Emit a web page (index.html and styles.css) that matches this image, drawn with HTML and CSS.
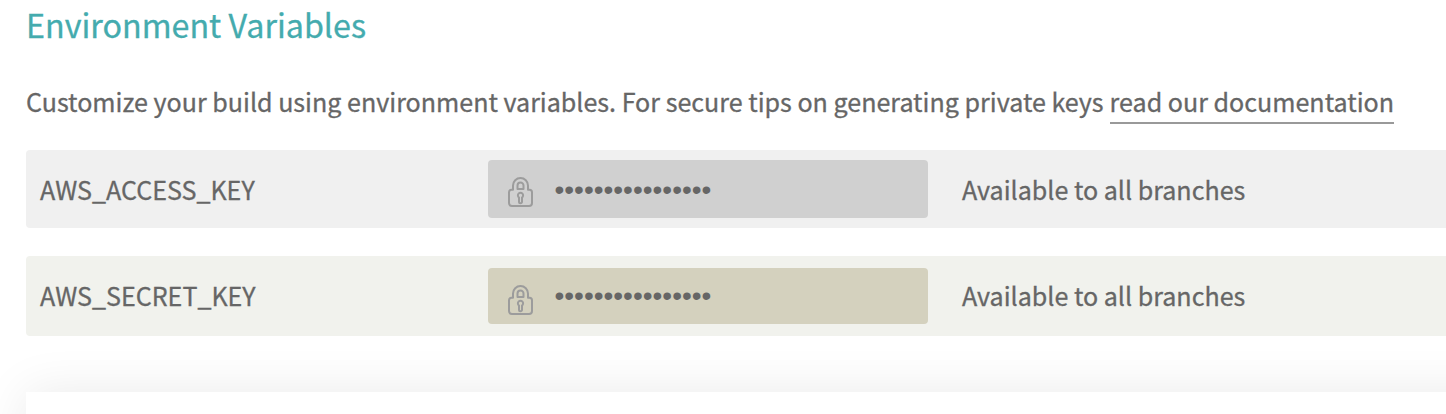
FILE: index.html
```html
<!DOCTYPE html>
<html lang="en">
<head><meta charset="utf-8"><title>Environment Variables</title><link rel="stylesheet" href="styles.css"></head>
<body>
<main class="settings">
<h1 class="title">Environment Variables</h1>
<p class="intro"><span>Customize your build using environment variables. For secure tips on generating private keys</span><a class="link" href="#">read our documentation</a></p>
<section class="vars">
<div class="row"><span class="name">AWS_ACCESS_KEY</span><div class="value"><svg class="lock" viewBox="0 0 25 30" width="25" height="30"><path d="M5 12.8V8.5a7.5 7.5 0 0 1 15 0V12.8H21.500a2.500 2.500 0 0 1 2.500 2.500V26a3 3 0 0 1-3 3H4a3 3 0 0 1-3-3V15.300a2.500 2.500 0 0 1 2.500-2.500Z"/><path d="M9.500 12V8.500a3 3 0 0 1 6 0V12Z"/><path d="M11 20.500a2.600 2.600 0 1 1 3 0V24.700a1.500 1.500 0 0 1-3 0Z"/></svg><span class="dots">••••••••••••••••</span></div><span class="scope">Available to all branches</span></div>
<div class="row row-alt"><span class="name">AWS_SECRET_KEY</span><div class="value"><svg class="lock" viewBox="0 0 25 30" width="25" height="30"><path d="M5 12.8V8.5a7.5 7.5 0 0 1 15 0V12.8H21.500a2.500 2.500 0 0 1 2.500 2.500V26a3 3 0 0 1-3 3H4a3 3 0 0 1-3-3V15.300a2.500 2.500 0 0 1 2.500-2.500Z"/><path d="M9.500 12V8.500a3 3 0 0 1 6 0V12Z"/><path d="M11 20.500a2.600 2.600 0 1 1 3 0V24.700a1.500 1.500 0 0 1-3 0Z"/></svg><span class="dots">••••••••••••••••</span></div><span class="scope">Available to all branches</span></div>
</section>
<div class="next-card"></div>
</main>
</body>
</html>
```
FILE: styles.css
```css
*{box-sizing:border-box}
body{margin:0;background:#fff;overflow:hidden;color:#666;font:25.07px/38px "Noto Sans CJK SC","Noto Sans",sans-serif;-webkit-text-stroke:.3px currentColor}
.settings{height:414px;padding-left:26px;overflow:hidden}
.title{margin:0;height:82px;font-size:32.25px;line-height:48px;font-weight:400;color:#44abae}
.intro{margin:0;height:68px;display:flex;gap:6px;white-space:nowrap;align-items:flex-start}
.link{color:inherit;text-decoration:none;border-bottom:2px solid #999;height:42px}
.vars{display:flex;flex-direction:column;gap:28px}
.row{height:78px;display:grid;grid-template-columns:448px 440px 1fr;align-items:center;padding-left:14px;background:#f0f0f0;border-radius:4px 0 0 4px}
.row-alt{height:80px;background:#f1f2ed}
.name,.scope{padding-bottom:1px}
.row-alt .name,.row-alt .scope{padding-bottom:2px}
.value{height:58px;background:#d0d0d0;border-radius:4px;display:flex;align-items:center;padding-left:20px}
.row-alt .value{height:56px;background:#d4d1be}
.lock{flex:none;margin-top:6px;fill:none;stroke:#9c9c9c;stroke-width:2;stroke-linejoin:round}
.row-alt .lock{margin-top:8px}
.dots{margin-left:21.5px;padding-top:2px;font-family:"Liberation Sans",sans-serif;font-size:28px;-webkit-text-stroke:0}
.row-alt .dots{padding-top:0}
.scope{padding-left:34px}
.next-card{margin:56px -60px 0 0;height:100px;background:#fff;box-shadow:0 0 50px rgba(0,0,0,.085)}
```
